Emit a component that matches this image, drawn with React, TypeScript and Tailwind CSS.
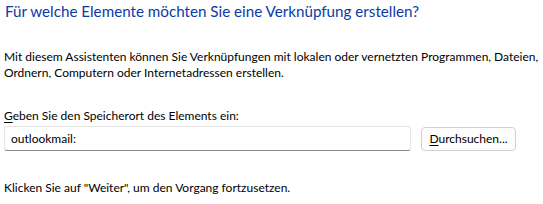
export default function App() {
  return (
    <div className="w-[543px] h-[204px] bg-white text-black font-['Lato',sans-serif] text-[12px] leading-[16px] overflow-hidden">
      <div className="pl-[4px]">
        <h1 className="text-[15.2px] leading-[22px] text-[#0a3aa8] font-normal pl-[1px]">
          Für welche Elemente möchten Sie eine Verknüpfung erstellen?
        </h1>
        <p className="mt-[27px] whitespace-nowrap">
          Mit diesem Assistenten können Sie Verknüpfungen mit lokalen oder vernetzten Programmen, Dateien,
          <br />
          Ordnern, Computern oder Internetadressen erstellen.
        </p>
        <label className="block mt-[27px]">
          <span className="underline underline-offset-2">G</span>eben Sie den Speicherort des Elements ein:
        </label>
        <div className="flex items-center mt-[2px] gap-[10px]">
          <div className="w-[407px] h-[25px] rounded-[3px] border border-[#e5e5e5] border-b-[#8a8a8a] flex items-center pl-[6px] bg-white">
            outlookmail:
          </div>
          <button className="w-[95px] h-[24px] rounded-[4px] border border-[#d0d0d0] bg-[#fdfdfd] flex items-center justify-center">
            <span>
              <span className="underline underline-offset-2">D</span>urchsuchen...
            </span>
          </button>
        </div>
        <p className="mt-[29px]">Klicken Sie auf "Weiter", um den Vorgang fortzusetzen.</p>
      </div>
    </div>
  );
}
